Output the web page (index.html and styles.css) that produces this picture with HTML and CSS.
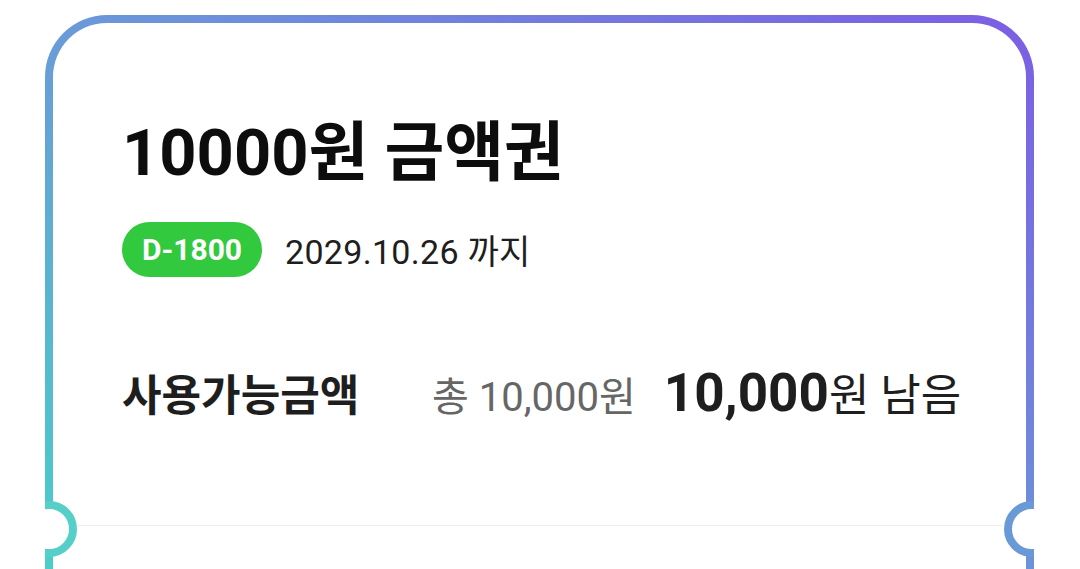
FILE: index.html
```html
<!DOCTYPE html>
<html lang="ko">
<head>
<meta charset="utf-8">
<link rel="stylesheet" href="styles.css">
</head>
<body>
<div class="ticket">
  <div class="inner">
    <section class="top">
      <h1 class="title">10000원 금액권</h1>
      <div class="due">
        <span class="badge">D-1800</span>
        <span class="date">2029.10.26 까지</span>
      </div>
      <div class="amount">
        <span class="label">사용가능금액</span>
        <span class="total">총 10,000원</span>
        <span class="remain"><b>10,000</b>원 남음</span>
      </div>
    </section>
    <section class="bottom"></section>
  </div>
  <span class="notch notch-left"></span>
  <span class="notch notch-right"></span>
</div>
</body>
</html>
```
FILE: styles.css
```css
html, body {
  margin: 0;
  padding: 0;
  background: #ffffff;
}
body {
  width: 1080px;
  height: 569px;
  overflow: hidden;
  font-family: "Roboto", "Noto Sans CJK KR", sans-serif;
  color: #111;
}
.ticket {
  position: relative;
  margin: 15px 0 0 45px;
  width: 989px;
  height: 640px;
  padding: 8px;
  box-sizing: border-box;
  border-radius: 62px 62px 0 0;
  background: linear-gradient(to top right, #45d6c6 0%, #6a9ad8 50%, #7c5de3 100%);
  overflow: hidden;
}
.inner {
  background: #fff;
  height: 100%;
  border-radius: 54px 54px 0 0;
  display: flex;
  flex-direction: column;
}
.top {
  height: 503px;
  box-sizing: border-box;
  padding: 98px 0 0 44px;
  margin: 0 24px 0 25px;
  border-bottom: 1px solid #ececec;
}
.title {
  margin: 0;
  font-size: 65px;
  line-height: 64px;
  font-weight: 700;
  color: #0d0d0d;
  letter-spacing: 0;
}
.due {
  display: flex;
  align-items: center;
  gap: 23px;
  margin-top: 37px;
}
.badge {
  display: inline-flex;
  align-items: center;
  justify-content: center;
  width: 140px;
  height: 55px;
  border-radius: 28px;
  background: #33c93f;
  color: #fff;
  font-size: 30px;
  font-weight: 700;
}
.date {
  font-size: 34px;
  color: #1e1e1e;
  letter-spacing: 0.3px;
}
.amount {
  display: flex;
  align-items: baseline;
  margin-top: 83px;
  color: #1e1e1e;
}
.label {
  font-size: 43px;
  font-weight: 700;
  width: 310px;
}
.total {
  font-size: 40px;
  color: #666;
  margin-right: 28px;
}
.remain {
  font-size: 44px;
}
.remain b {
  font-size: 53px;
  font-weight: 700;
}
.bottom {
  flex: 1;
}
.notch {
  position: absolute;
  top: 486px;
  width: 56px;
  height: 56px;
  border-radius: 50%;
  border: 8px solid #56cfc9;
  background: #fff;
  box-sizing: border-box;
}
.notch-left {
  left: -24px;
}
.notch-right {
  left: 959px;
  border-color: #6a9ad6;
}
```
